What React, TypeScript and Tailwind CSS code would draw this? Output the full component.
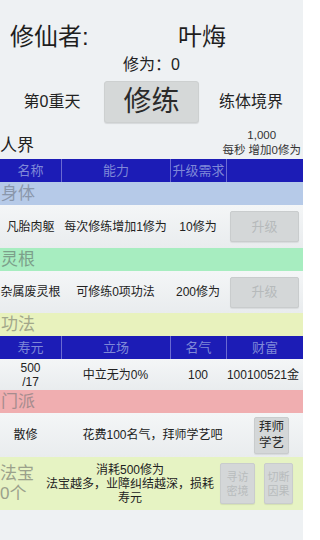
const font = { fontFamily: '"Liberation Sans", "Noto Sans CJK SC", sans-serif' };

function SectionBar({ label, className }: { label: string; className: string }) {
  return (
    <div className={`flex h-[23px] items-center pl-[1px] text-[17px] leading-none ${className}`}>
      {label}
    </div>
  );
}

function GrayButton({ children, className = "" }: { children: React.ReactNode; className?: string }) {
  return (
    <button
      type="button"
      className={`flex items-center justify-center rounded-[2px] border border-[#c9cccd] bg-[#d4d7d8] shadow-[0_1px_1px_rgba(0,0,0,0.08)] ${className}`}
    >
      {children}
    </button>
  );
}

function HeaderBar({ cols }: { cols: string[] }) {
  return (
    <div className="grid h-[23px] grid-cols-[61px_109px_56px_1fr] bg-[#1c1cb6] text-[13px] text-[#7f88d8]">
      {cols.map((c, i) => (
        <div
          key={i}
          className={`flex items-center justify-center ${i > 0 ? "border-l border-[#6a6ad2]" : ""}`}
        >
          {c}
        </div>
      ))}
    </div>
  );
}

const row = "grid grid-cols-[61px_109px_56px_1fr] items-center whitespace-nowrap bg-gradient-to-b from-[#f4f6f7] to-[#e9ecee] text-[12px]";

export default function App() {
  return (
    <div style={font} className="h-[540px] w-[303px] overflow-hidden bg-[#eef1f3] text-[#222]">
      {/* player name */}
      <div className="mt-[20px] flex h-[34px] items-center justify-between pl-[10px] pr-[77px] text-[24px] leading-none text-[#1e1e1e]">
        <span>修仙者:</span>
        <span>叶烸</span>
      </div>
      <div className="flex h-[22px] items-center justify-center text-[16px] text-[#222]">修为：0</div>

      {/* cultivate row */}
      <div className="mt-[5px] flex h-[42px] items-center">
        <div className="w-[104px] text-center text-[16px]">第0重天</div>
        <button
          type="button"
          className="flex h-[42px] w-[95px] items-center justify-center rounded-[3px] border border-[#cdd0d0] bg-[#d5d8d8] text-[28px] leading-none text-[#2a2a2a] shadow-[0_1px_1px_rgba(0,0,0,0.1)]"
        >
          修练
        </button>
        <div className="flex-1 text-center text-[16px]">练体境界</div>
      </div>

      {/* realm */}
      <div className="flex h-[36px] items-center justify-between">
        <span className="mt-[8px] text-[17px] leading-none">人界</span>
        <div className="mt-[4px] pr-[2px] text-center text-[11.5px] leading-[15px] text-[#333]">
          <div>1,000</div>
          <div>每秒 增加0修为</div>
        </div>
      </div>

      <HeaderBar cols={["名称", "能力", "升级需求", ""]} />

      <SectionBar label="身体" className="bg-[#b6cae8] text-[#8a97ab]" />
      <div className={`${row} h-[43px]`}>
        <div className="text-center">凡胎肉躯</div>
        <div className="text-center">每次修练增加1修为</div>
        <div className="text-center">10修为</div>
        <div className="flex justify-end pr-[4px]">
          <GrayButton className="h-[31px] w-[69px] text-[13px] text-[#b6babb]">升级</GrayButton>
        </div>
      </div>

      <SectionBar label="灵根" className="h-[22px] bg-[#a7edc0] text-[#7c9f8a]" />
      <div className={`${row} h-[42px]`}>
        <div className="text-center">杂属废灵根</div>
        <div className="text-center">可修练0项功法</div>
        <div className="text-center">200修为</div>
        <div className="flex justify-end pr-[4px]">
          <GrayButton className="h-[31px] w-[69px] text-[13px] text-[#b6babb]">升级</GrayButton>
        </div>
      </div>

      <SectionBar label="功法" className="bg-[#e8f2bd] text-[#a2a78a]" />
      <HeaderBar cols={["寿元", "立场", "名气", "财富"]} />
      <div className={`${row} h-[31px]`}>
        <div className="text-center leading-[14px]">
          <div>500</div>
          <div>/17</div>
        </div>
        <div className="text-center">中立无为0%</div>
        <div className="text-center">100</div>
        <div className="pr-[4px] text-right">100100521金</div>
      </div>

      <SectionBar label="门派" className="h-[22px] bg-[#f0aeb0] text-[#a68c8e]" />
      <div className="flex h-[44px] items-center whitespace-nowrap bg-gradient-to-b from-[#f4f6f7] to-[#e9ecee] text-[12px]">
        <div className="w-[51px] text-center">散修</div>
        <div className="w-[203px] text-center">花费100名气，拜师学艺吧</div>
        <GrayButton className="h-[37px] w-[35px] text-[12.5px] leading-[16px] text-[#2a2a2a]">
          <span className="text-center">
            拜师
            <br />
            学艺
          </span>
        </GrayButton>
      </div>

      {/* treasure */}
      <div className="flex h-[53px] items-center bg-[#e6f3c3] pr-[10px]">
        <div className="w-[44px] text-[17px] leading-[20px] text-[#9ba18b]">
          <div>法宝</div>
          <div>0个</div>
        </div>
        <div className="w-[172px] text-center text-[12px] leading-[14px] text-[#222]">
          <div>消耗500修为</div>
          <div>法宝越多，业障纠结越深，损耗寿元</div>
        </div>
        <div className="ml-auto flex gap-[9px]">
          <GrayButton className="h-[41px] w-[35px] text-[11px] leading-[14px] text-[#b8bcbd]">
            <span className="text-center">
              寻访
              <br />
              密境
            </span>
          </GrayButton>
          <GrayButton className="h-[41px] w-[29px] text-[11px] leading-[14px] text-[#b8bcbd]">
            <span className="text-center">
              切断
              <br />
              因果
            </span>
          </GrayButton>
        </div>
      </div>
    </div>
  );
}
